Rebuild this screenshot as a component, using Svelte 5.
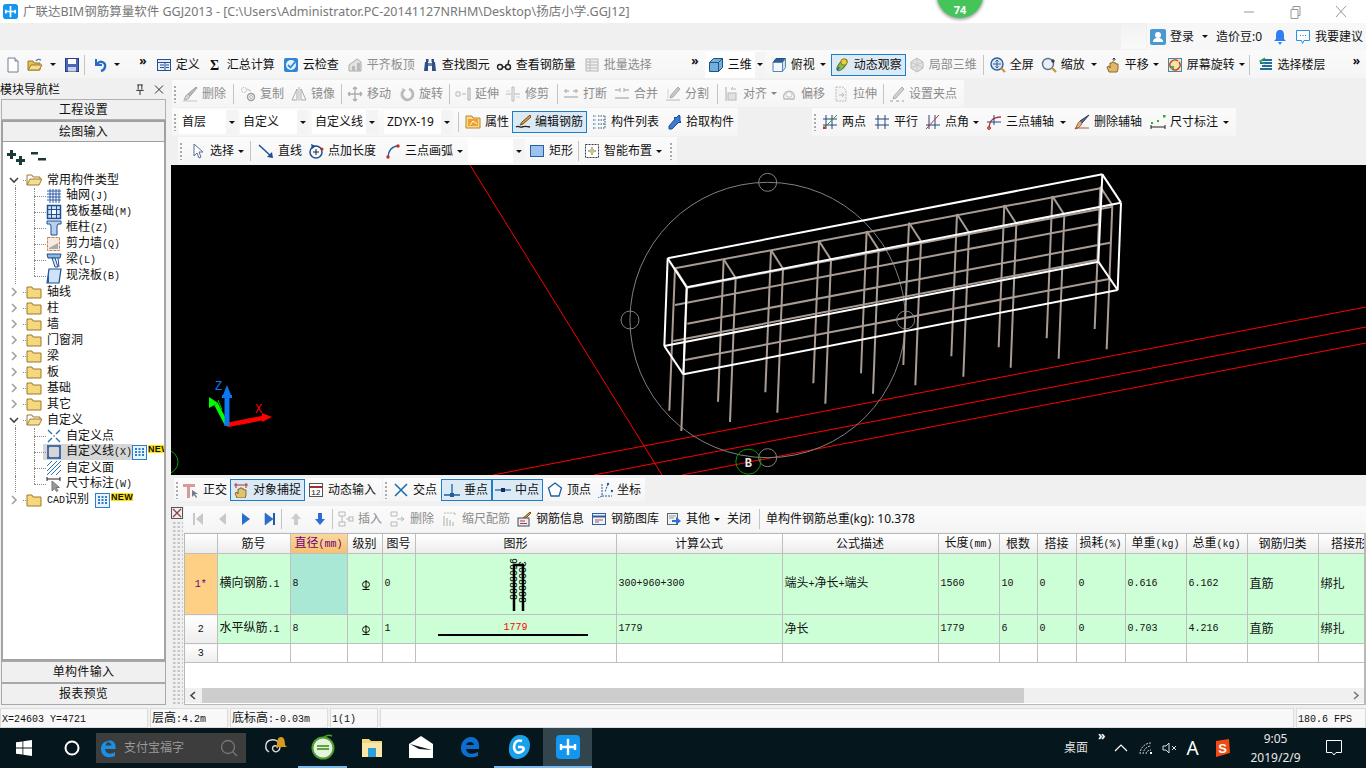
<script lang="ts">
  // 16x16 icon bodies, keyed by name
  const ICONS: Record<string, string> = {
    new: '<path d="M3 1h7l3 3v11H3z" fill="#fff" stroke="#6f7f90"/><path d="M10 1v3h3" fill="#dde5ee" stroke="#6f7f90"/>',
    open: '<path d="M1 13V4h5l1 2h6v7z" fill="#e8bf5a" stroke="#9a7a2a"/><path d="M1 13l3-5h11l-3 5z" fill="#f6dc8c" stroke="#9a7a2a"/><path d="M9 4c1-2 3-2 5-1" fill="none" stroke="#4a7fb5" stroke-width="1.4"/>',
    save: '<rect x="1.5" y="1.5" width="13" height="13" fill="#4a68b8" stroke="#27407f"/><rect x="4" y="2" width="8" height="5" fill="#fff"/><rect x="4" y="10" width="8" height="4.5" fill="#c8d3ea"/>',
    undo: '<path d="M3 2v6h6" fill="none" stroke="#2a6cc4" stroke-width="2"/><path d="M4 7c3-4 9-2 8 3-.4 2-2 3.500-4 4" fill="none" stroke="#2a6cc4" stroke-width="2.400"/>',
    def: '<rect x="1.500" y="2.500" width="13" height="11" fill="#e6eefa" stroke="#24528f"/><path d="M1.500 5.500h13M4 8h4M4 10.500h4M10 8h3M10 10.500h3M9 5.500v8" stroke="#24528f" fill="none"/>',
    sigma: '<text x="3" y="13" font-size="14" font-weight="700" font-family="Liberation Serif" fill="#111">Σ</text>',
    cloud: '<rect x="1" y="1" width="14" height="14" rx="2" fill="#2f86d6"/><circle cx="8" cy="8" r="5" fill="#e8f3fc"/><path d="M5 8l2.500 2.500L12 5" fill="none" stroke="#2f86d6" stroke-width="1.800"/>',
    level: '<path d="M2 14V8l8-6 4 3v9z" fill="#ddd" stroke="#999"/><path d="M5 14V9h3v5zM10 14V6h3v8z" fill="#aaa"/>',
    binoc: '<path d="M2 14l1-9h3v9zM10 14V5h3l1 9z" fill="#2d4f86"/><rect x="6" y="6" width="4" height="3" fill="#5b7fb5"/><rect x="4" y="2" width="2.500" height="3" fill="#2d4f86"/><rect x="9.500" y="2" width="2.500" height="3" fill="#2d4f86"/>',
    glasses: '<circle cx="4" cy="10" r="2.500" fill="none" stroke="#222" stroke-width="1.400"/><circle cx="12" cy="10" r="2.500" fill="none" stroke="#222" stroke-width="1.400"/><path d="M6.500 10h3M12 7l1-4" stroke="#222" stroke-width="1.300" fill="none"/>',
    batch: '<rect x="2" y="2" width="12" height="12" fill="#eee" stroke="#aaa"/><path d="M2 5h12M2 8h12M2 11h12M6 2v12" stroke="#aaa"/>',
    cube: '<path d="M1.500 5.500l4-4h9v9l-4 4h-9z" fill="#6fb0dc" stroke="#23527f"/><path d="M1.500 5.500h9v9M10.500 5.500l4-4" fill="none" stroke="#23527f"/>',
    cubetop: '<path d="M5 1.500h9.500l-3 4H2z" fill="#2f5f98" stroke="#23527f"/><path d="M2 5.500h9.500v9H2z" fill="#f4f8fc" stroke="#5a86b0"/><path d="M11.500 5.500l3-4v9l-3 4z" fill="#cfe3f2" stroke="#5a86b0"/>',
    orbit: '<ellipse cx="8" cy="8" rx="7" ry="3" transform="rotate(-50 8 8)" fill="#8fb84a" stroke="#4a7a3a"/><circle cx="10" cy="5" r="3.200" fill="#e8d23c" stroke="#8a7a1a"/><path d="M3 13l2-3" stroke="#1f6f8f" stroke-width="2"/>',
    local3d: '<path d="M8 1l6 4v6l-6 4-6-4V5z" fill="#ddd" stroke="#aaa"/><path d="M2 5l12 6M14 5L2 11M8 1v14" stroke="#bbb" fill="none"/>',
    full: '<circle cx="7" cy="7" r="6" fill="#d8e6f6" stroke="#2f5f98" stroke-width="1.400"/><path d="M7 3v8M3 7h8M7 3l-1.500 1.500M7 3l1.500 1.500M7 11l-1.500-1.500M7 11l1.500-1.500" stroke="#2f5f98" fill="none"/><path d="M11 11l4 4" stroke="#c89030" stroke-width="2"/>',
    zoom: '<circle cx="7" cy="7" r="5.500" fill="#e8eff8" stroke="#5a6f88" stroke-width="1.400"/><path d="M11 11l4 4" stroke="#c89030" stroke-width="2.200"/><path d="M12 2v4M10 4h4" stroke="#222"/>',
    pan: '<path d="M4 15l-2-5 2-1 1 2V6h2v-1h2v1h2v1h2v5l-1 3z" fill="#e2b868" stroke="#8a6a2a"/><path d="M9 1v3M7.500 2.500L9 1l1.500 1.500" stroke="#334" fill="none"/>',
    rotscr: '<rect x="1.500" y="1.500" width="13" height="13" fill="#f2e6a6" stroke="#3a8ac0"/><path d="M4 11a5 5 0 0 1 7-7M12 5a5 5 0 0 1-7 7" fill="none" stroke="#d03020" stroke-width="1.300"/><rect x="4" y="9" width="3" height="3" fill="#58a858"/>',
    floors: '<path d="M4 3h10M2 6h12M4 9h10M2 12h12" stroke="#1f6f9f" stroke-width="1.800"/><path d="M7 1L2 4l5 3" fill="none" stroke="#3a9a5a" stroke-width="1.300"/>',
    brush: '<path d="M14 1l1 1-7 8-2-2z" fill="#aaa" stroke="#888"/><path d="M6 8l2 2c-1 3-3 4-6 4 1-1 1-5 4-6z" fill="#ccc" stroke="#999"/><path d="M1 15h14" stroke="#bbb"/>',
    copy: '<circle cx="4" cy="4" r="2.500" fill="none" stroke="#999" stroke-dasharray="1.500 1"/><circle cx="11" cy="11" r="3.500" fill="none" stroke="#888" stroke-width="1.400"/><circle cx="11" cy="11" r="1.500" fill="none" stroke="#aaa"/><path d="M7 3l4 2" stroke="#aaa"/>',
    mirror: '<path d="M1 14L6 3v11zM15 14L10 3v11z" fill="none" stroke="#999"/><path d="M8 1v14" stroke="#aaa"/>',
    move: '<path d="M8 1v14M1 8h14M8 1L6 3M8 1l2 2M8 15l-2-2M8 15l2-2M1 8l2-2M1 8l2 2M15 8l-2-2M15 8l-2 2" fill="none" stroke="#999" stroke-width="1.300"/>',
    rot: '<path d="M10 3a5.500 5.500 0 1 1-6 2" fill="none" stroke="#aaa" stroke-width="2.800"/><path d="M3 2l1 5 3-3z" fill="#aaa"/>',
    extend: '<path d="M1 6h4v4H1zM7 8h4" fill="none" stroke="#aaa"/><path d="M13 2h2v12h-2z" fill="none" stroke="#999"/>',
    trim: '<path d="M7 1h2v14H7zM1 8h5M10 8h5" fill="none" stroke="#aaa"/><path d="M1 5h4M11 11h4" stroke="#ccc"/>',
    brk: '<path d="M1 5h5M10 5h5M1 11h14M3 3v4M13 3v4" fill="none" stroke="#aaa" stroke-width="1.300"/>',
    merge: '<path d="M1 4h5M10 4h5M1 12h14M6 2v4M10 2v4" fill="none" stroke="#aaa" stroke-width="1.300"/>',
    split: '<path d="M13 1l2 2-7 8-3 1 1-3z" fill="#bbb" stroke="#999"/><path d="M1 14h14" stroke="#aaa"/><path d="M3 3v9" stroke="#ccc"/>',
    alignl: '<path d="M3 1v14" stroke="#999"/><rect x="5" y="7" width="8" height="7" fill="#ddd" stroke="#aaa"/><path d="M8 3h5M8 3l2-2" stroke="#aaa" fill="none"/>',
    offset: '<path d="M3 13a5.500 5.500 0 1 1 10 0z" fill="none" stroke="#aaa" stroke-width="1.300"/><path d="M6 11a3 3 0 1 1 4 0z" fill="none" stroke="#bbb"/>',
    stretch: '<path d="M3 1h7l3 3v11H3z" fill="#f4f4f4" stroke="#aaa" stroke-dasharray="2 1"/><path d="M6 9h5M9 7l2 2-2 2" stroke="#aaa" fill="none"/>',
    grips: '<path d="M13 1l2 2-8 9-3 1 1-3z" fill="#ccc" stroke="#999"/><path d="M1 15h3M7 15h3M13 15h2" stroke="#888"/>',
    props: '<path d="M1 14V2h6l1 2h7v10z" fill="#f6dc8c" stroke="#b8862a"/><rect x="3" y="5" width="10" height="7" fill="#f0a030"/><path d="M5 11l3-4 4 3" fill="none" stroke="#fff"/>',
    edit: '<path d="M15 1l-8 7-2 3 3-1 8-7z" fill="#d8a040" stroke="#7a4a1a"/><path d="M1 13c3-2 4 1 6 0s4-1 8 0" fill="none" stroke="#222" stroke-width="1.400"/>',
    list: '<path d="M2 2h3M2 6h3M2 10h3M2 14h3M7 2h7M7 6h7M7 10h7M7 14h7M14 2v12" stroke="#1f4f80" stroke-dasharray="1.500 1" fill="none"/>',
    pick: '<path d="M14 2l-1-1-3 3-1-1-1 1 1 1-6 7v3h3l7-7 1 1 1-1-1-1z" fill="#3a7ad0" stroke="#1f4f90"/>',
    two: '<path d="M4 1v14M10 1v14M1 5h14M1 11h14" stroke="#24467f" fill="none"/><path d="M1 15L15 1" stroke="#3a9a3a"/><rect x="1" y="12.500" width="2.500" height="2.500" fill="#c03020"/>',
    par: '<path d="M4 1v14M11 1v14M1 5h14M1 11h14" stroke="#24467f" fill="none"/>',
    angle: '<path d="M4 1v14M10 1v14M1 11h14" stroke="#24467f" fill="none"/><path d="M1 15L14 1" stroke="#c03030"/>',
    arc3: '<path d="M3 15c0-7 3-12 12-12" fill="none" stroke="#c03030" stroke-width="1.300"/><path d="M1 8h14M8 1v10" stroke="#24467f"/><circle cx="3" cy="14" r="1.500" fill="none" stroke="#c03030"/>',
    delaux: '<path d="M15 1l-7 8-2-2z" fill="#5a6fb0" stroke="#334"/><path d="M6 7l2 2c-1 3-3 5-7 6 2-2 2-6 5-8z" fill="#e2b868" stroke="#865"/><path d="M1 14h14" stroke="#a55"/>',
    dim: '<path d="M1 11v4M15 11v4M1 13h14" stroke="#222" fill="none"/><rect x="1" y="8" width="2" height="2" fill="#3a3"/><rect x="13" y="1" width="2.500" height="2.500" fill="#3a3"/><rect x="7" y="6" width="2" height="2" fill="#3a3"/>',
    cursor: '<path d="M4 1v12l3-3 2 5 2-1-2-5h4z" fill="#fff" stroke="#5a6f90"/>',
    line: '<path d="M1 2l13 12" stroke="#1f4f90" stroke-width="1.500"/><path d="M15 15l-1-6-5 5z" fill="#1f4f90"/>',
    addlen: '<circle cx="8" cy="9" r="6" fill="none" stroke="#1f4f90" stroke-width="1.500"/><path d="M8 6v6M5 9h6" stroke="#222"/><path d="M3 1l1 5 4-3z" fill="#1f4f90"/><circle cx="14" cy="6" r="1.500" fill="#c03020"/>',
    arc: '<path d="M3 14C3 8 7 3 13 3" fill="none" stroke="#2a5fa0" stroke-width="1.500"/><circle cx="3" cy="14" r="1.700" fill="#c03020"/><circle cx="13" cy="3" r="1.700" fill="#c03020"/>',
    rect: '<rect x="1.500" y="2.500" width="13" height="11" fill="#9cc2ee" stroke="#2a5fa0"/>',
    smart: '<rect x="1.500" y="1.500" width="13" height="13" fill="#fff" stroke="#334" stroke-dasharray="2 1"/><path d="M8 4v8M4 8h8" stroke="#2a6fc0"/><rect x="6" y="6" width="4" height="4" fill="#e8c050"/>',
    ortho: '<path d="M0 2h12v3H7v11H4V5H0z" fill="#d89a9a"/><path d="M9 8v7l2-2 2 3 1-1-2-3h3z" fill="#778"/>',
    snap: '<path d="M4 16l-2-5 2-1 1 2V7h2V6h2v1h2v1h2v5l-1 3z" fill="#e2c470" stroke="#8a6a2a"/><path d="M1 3h14M3 1v5M13 1v5" stroke="#a33" fill="none"/>',
    dyn: '<rect x="1.500" y="1.500" width="13" height="13" fill="#fff" stroke="#555"/><path d="M1.500 5h13" stroke="#a03030" stroke-width="2"/><text x="3" y="13" font-size="8" font-family="Liberation Mono" fill="#111">12</text>',
    cross: '<path d="M2 2l12 12M14 2L2 14" stroke="#1f6fb0" stroke-width="1.600"/>',
    perp: '<path d="M0 13h16M8 2v11" stroke="#1f5f9f" stroke-width="1.300"/><rect x="6" y="11" width="4" height="4" fill="#1f5f9f"/>',
    mid: '<path d="M0 8h16" stroke="#1f5f9f" stroke-width="1.300"/><rect x="6" y="6" width="4" height="4" fill="#12305f"/>',
    vertex: '<path d="M8 1l6.500 5-2.500 8H4L1.500 6z" fill="#fff" stroke="#1f5f9f" stroke-width="1.300"/>',
    coord: '<path d="M5 2v12h10M5 14l-4 2M11 2l-3 8" stroke="#1f5f9f" stroke-dasharray="2 1" fill="none"/><circle cx="11" cy="2" r="1.200" fill="#1f5f9f"/><circle cx="15" cy="9" r="1.200" fill="#1f5f9f"/>',
    first: '<rect x="3" y="2" width="2" height="12" fill="#c8c8c8"/><path d="M13 2v12L6 8z" fill="#c8c8c8"/>',
    prev: '<path d="M12 2v12L5 8z" fill="#c8c8c8"/>',
    next: '<path d="M4 2v12l8-6z" fill="#2a6fd0"/>',
    last: '<path d="M3 2v12l8-6z" fill="#2a6fd0" stroke="#1f5fa0" stroke-width=".5"/><rect x="11" y="2" width="2" height="12" fill="#1f5fa0"/>',
    up: '<path d="M8 2l5 6h-3v6H6V8H3z" fill="#ccc"/>',
    down: '<path d="M8 14l5-6h-3V2H6v6H3z" fill="#2a6fd0"/>',
    ins: '<path d="M1 1h6v4H1zM1 11h6v4H1zM4 5v6M8 8h4" fill="none" stroke="#aaa"/><rect x="11" y="6" width="4" height="4" fill="none" stroke="#aaa"/>',
    delr: '<path d="M1 1h6v4H1zM1 11h6v4H1zM7 8h7M11 6l3 2-3 2" fill="none" stroke="#aaa"/>',
    scale: '<path d="M2 15V5M5 15V7M8 15V9M11 15v-4" stroke="#bbb" stroke-width="1.500"/><path d="M2 2h11M13 2v3" stroke="#aaa" stroke-dasharray="2 1" fill="none"/>',
    info: '<path d="M14 1l1 1-7 7-2-1z" fill="#d8a040" stroke="#7a4a1a"/><rect x="2" y="7" width="11" height="8" fill="#e8eef8" stroke="#445"/><path d="M4 10h5M4 12.500h7" stroke="#c03030"/>',
    lib: '<rect x="1.500" y="2.500" width="13" height="11" fill="#eef3fa" stroke="#2f5f98"/><path d="M1.500 5.500h13" stroke="#2f5f98" stroke-width="2"/><path d="M4 9h8M4 11h4" stroke="#a55"/>',
    other: '<rect x="1.500" y="2.500" width="10" height="11" fill="#eef3fa" stroke="#566"/><path d="M3 5h7M3 7h5" stroke="#999"/><path d="M6 9h4V6l5 4-5 4v-3H6z" fill="#2a6fd0"/>',
    user: '<rect width="16" height="16" rx="2" fill="#4a9ad0"/><circle cx="8" cy="6" r="3" fill="#fff"/><path d="M3 13c0-3 2-4 5-4s5 1 5 4z" fill="#fff"/>',
    bell: '<path d="M8 1c3 0 4 2 4 5v4l2 2H2l2-2V6c0-3 1-5 4-5z" fill="#2f7ff0"/><path d="M6 13h4l-2 3z" fill="#2f7ff0"/>',
    suggest: '<path d="M1.500 1.500h13v10H9l-1.500 3-1-3h-5z" fill="#fff" stroke="#2f8fe0"/><path d="M5 6.500h1M7.500 6.500h1M10 6.500h1" stroke="#2f6fc0"/>',
    grid: '<path d="M1 3h14M1 6h14M1 9h14M1 12h14M4 1v14M7 1v14M10 1v14M13 1v14" stroke="#2a5fa8"/>',
    raft: '<rect x="1.500" y="1.500" width="13" height="13" fill="#cfe2f4" stroke="#1f4f90" stroke-width="1.500"/><path d="M1.500 5.500h13M1.500 10.500h13M5.500 1.500v13M10.500 1.500v13" stroke="#1f4f90"/><rect x="6" y="6" width="4" height="4" fill="#fff"/>',
    col: '<path d="M1 1h14v3h-3l-1 2v9H5V6L4 4H1z" fill="#b8d0ec" stroke="#1f4f90"/>',
    wall: '<rect x="1.500" y="1.500" width="12" height="13" fill="#f4ece4" stroke="#d08040" stroke-dasharray="3 1"/><path d="M3 12l9-5v6H3z" fill="#aaa"/>',
    beam: '<path d="M1 2h14l-1 4H2z" fill="#8cb8e0" stroke="#1f4f90"/><path d="M6 6h3l3 9H9z" fill="#dceaf8" stroke="#1f4f90"/><path d="M12 6l1 9" stroke="#1f4f90"/>',
    slab: '<path d="M3 1h12l-2 14H1z" fill="#cfe2f8" stroke="#1f4f90" stroke-width="1.200"/><path d="M3 1L1 15h2z" fill="#2a5fa8"/>',
    xpt: '<path d="M2 2l4 4M10 10l4 4M14 2l-4 4M6 10l-4 4" stroke="#2a6fb0" stroke-width="1.300"/><circle cx="8" cy="8" r="1" fill="#99b"/>',
    ln: '<rect x="2" y="2" width="12" height="12" fill="none" stroke="#1f4f90" stroke-width="1.500"/><rect x="1" y="1" width="2.500" height="2.500" fill="#2a6fb0"/><rect x="12.500" y="1" width="2.500" height="2.500" fill="#2a6fb0"/><rect x="1" y="12.500" width="2.500" height="2.500" fill="#2a6fb0"/><rect x="12.500" y="12.500" width="2.500" height="2.500" fill="#2a6fb0"/>',
    hatch: '<path d="M1 6l5-5M1 11L11 1M1 15L15 1M5 15L15 5M10 15l5-5" stroke="#2a6fb0"/>',
    dimr: '<path d="M1 1v4M14 1v4M1 3h13" stroke="#222"/><path d="M6 5v10l2.500-2.500 2 3 1.500-1-2-3h3.500z" fill="#999" stroke="#777"/>',
  };

  type Item = { i?: string; t?: string; w?: number; c?: boolean; d?: boolean; a?: boolean; hl?: boolean; k?: string; sp?: number };

  const bar1: Item[] = [
    { sp: 2 }, { i: 'new', w: 22 }, { i: 'open', w: 37, c: true }, { i: 'save', w: 21 }, { k: 'sep' }, { sp: 2 },
    { i: 'undo', w: 35, c: true }, { k: 'more', w: 28 },
    { i: 'def', t: '定义', w: 51 }, { i: 'sigma', t: '汇总计算', w: 76 }, { i: 'cloud', t: '云检查', w: 64 },
    { i: 'level', t: '平齐板顶', w: 75, d: true }, { i: 'binoc', t: '查找图元', w: 74 }, { i: 'glasses', t: '查看钢筋量', w: 88 },
    { i: 'batch', t: '批量选择', w: 74, d: true }, { k: 'more', w: 50 },
    { i: 'cube', t: '三维', w: 63, c: true, hl: true }, { i: 'cubetop', t: '俯视', w: 63, c: true }, { i: 'orbit', t: '动态观察', w: 75, a: true },
    { i: 'local3d', t: '局部三维', w: 75, d: true }, { k: 'sep' }, { i: 'full', t: '全屏', w: 51 }, { i: 'zoom', t: '缩放', w: 64, c: true },
    { i: 'pan', t: '平移', w: 62, c: true }, { i: 'rotscr', t: '屏幕旋转', w: 83, c: true }, { k: 'sep' }, { sp: 2 }, { i: 'floors', t: '选择楼层', w: 75 },
    { sp: 22 }, { k: 'more', w: 16 },
  ];
  const bar2: Item[] = [
    { k: 'grip' }, { i: 'brush', t: '删除', w: 51, d: true }, { k: 'sep' }, { sp: 1 }, { i: 'copy', t: '复制', w: 51, d: true }, { i: 'mirror', t: '镜像', w: 50, d: true },
    { k: 'sep' }, { i: 'move', t: '移动', w: 52, d: true }, { i: 'rot', t: '旋转', w: 50, d: true }, { k: 'sep' }, { i: 'extend', t: '延伸', w: 50, d: true },
    { i: 'trim', t: '修剪', w: 52, d: true }, { k: 'sep' }, { i: 'brk', t: '打断', w: 51, d: true }, { i: 'merge', t: '合并', w: 51, d: true }, { i: 'split', t: '分割', w: 52, d: true },
    { k: 'sep' }, { i: 'alignl', t: '对齐', w: 58, c: true, d: true }, { i: 'offset', t: '偏移', w: 52, d: true }, { i: 'stretch', t: '拉伸', w: 50, d: true }, { k: 'sep' },
    { i: 'grips', t: '设置夹点', w: 76, d: true },
  ];
  const bar3a: Item[] = [
    { k: 'grip' }, { k: 'sel', t: '首层', w: 59 }, { sp: 2 }, { k: 'sel', t: '自定义', w: 69 }, { sp: 3 }, { k: 'sel', t: '自定义线', w: 66 }, { sp: 6 },
    { k: 'sel', t: 'ZDYX-19', w: 69 }, { sp: 2 }, { k: 'sep' }, { sp: 1 }, { i: 'props', t: '属性', w: 50 }, { i: 'edit', t: '编辑钢筋', w: 75, a: true }, { sp: 1 },
    { i: 'list', t: '构件列表', w: 75 }, { i: 'pick', t: '拾取构件', w: 73 },
  ];
  const bar3b: Item[] = [
    { k: 'grip' }, { i: 'two', t: '两点', w: 52 }, { i: 'par', t: '平行', w: 51 }, { i: 'angle', t: '点角', w: 61, c: true }, { i: 'arc3', t: '三点辅轴', w: 88, c: true },
    { i: 'delaux', t: '删除辅轴', w: 76 }, { i: 'dim', t: '尺寸标注', w: 87, c: true },
  ];
  const bar4: Item[] = [
    { k: 'grip' }, { sp: 2 }, { i: 'cursor', t: '选择', w: 60, c: true }, { k: 'sep' }, { sp: 2 }, { i: 'line', t: '直线', w: 50 }, { i: 'addlen', t: '点加长度', w: 75 }, { sp: 2 },
    { i: 'arc', t: '三点画弧', w: 86, c: true }, { k: 'sel', t: '', w: 57 }, { sp: 1 }, { i: 'rect', t: '矩形', w: 49 }, { k: 'sep' }, { i: 'smart', t: '智能布置', w: 86, c: true }, { sp: 1 }, { k: 'grip' },
  ];
  const snapA: Item[] = [
    { k: 'grip' }, { sp: -1 }, { i: 'ortho', t: '正交', w: 50 }, { i: 'snap', t: '对象捕捉', w: 75, a: true }, { i: 'dyn', t: '动态输入', w: 77 },
  ];
  const snapB: Item[] = [
    { k: 'grip' }, { i: 'cross', t: '交点', w: 51 }, { i: 'perp', t: '垂点', w: 51, a: true }, { i: 'mid', t: '中点', w: 51, a: true }, { sp: 1 }, { i: 'vertex', t: '顶点', w: 50 }, { i: 'coord', t: '坐标', w: 51 },
  ];
  const panelBar: Item[] = [
    { sp: 3 }, { i: 'first', w: 24 }, { i: 'prev', w: 24 }, { i: 'next', w: 24 }, { i: 'last', w: 19 }, { k: 'sep' }, { sp: 1 }, { i: 'up', w: 24 }, { i: 'down', w: 20 }, { k: 'sep' },
    { i: 'ins', t: '插入', w: 52, d: true }, { i: 'delr', t: '删除', w: 52, d: true }, { i: 'scale', t: '缩尺配筋', w: 74, d: true }, { i: 'info', t: '钢筋信息', w: 75 },
    { i: 'lib', t: '钢筋图库', w: 75 }, { i: 'other', t: '其他', w: 61, c: true }, { t: '关闭', w: 32 }, { k: 'sep' },
  ];

  type Node = { t: string; i?: string; open?: boolean; child?: boolean; last?: boolean; sel?: boolean; badge?: boolean };
  const tree: Node[] = [
    { t: '常用构件类型', open: true },
    { t: '轴网(J)', i: 'grid', child: true },
    { t: '筏板基础(M)', i: 'raft', child: true },
    { t: '框柱(Z)', i: 'col', child: true },
    { t: '剪力墙(Q)', i: 'wall', child: true },
    { t: '梁(L)', i: 'beam', child: true },
    { t: '现浇板(B)', i: 'slab', child: true, last: true },
    { t: '轴线' }, { t: '柱' }, { t: '墙' }, { t: '门窗洞' }, { t: '梁' }, { t: '板' }, { t: '基础' }, { t: '其它' },
    { t: '自定义', open: true },
    { t: '自定义点', i: 'xpt', child: true },
    { t: '自定义线(X)', i: 'ln', child: true, sel: true, badge: true },
    { t: '自定义面', i: 'hatch', child: true },
    { t: '尺寸标注(W)', i: 'dimr', child: true, last: true },
    { t: 'CAD识别', badge: true },
  ];

  const cols = [32, 73, 57, 35, 33, 201, 166, 156, 61, 38, 39, 49, 61, 61, 71, 62];
  const head = ['', '筋号', '直径(mm)', '级别', '图号', '图形', '计算公式', '公式描述', '长度(mm)', '根数', '搭接', '损耗(%)', '单重(kg)', '总重(kg)', '钢筋归类', '搭接形'];
  const rows = [
    { n: '1*', name: '横向钢筋.1', d: '8', no: '0', f: '300+960+300', desc: '端头+净长+端头', len: '1560', cnt: '10', lap: '0', loss: '0', uw: '0.616', tw: '6.162', cat: '直筋', lt: '绑扎' },
    { n: '2', name: '水平纵筋.1', d: '8', no: '1', f: '1779', desc: '净长', len: '1779', cnt: '6', lap: '0', loss: '0', uw: '0.703', tw: '4.216', cat: '直筋', lt: '绑扎' },
  ];

  // split into CJK and latin runs: latin is drawn in the narrow mono face
  function runs(s: string) {
    return (s.match(/[\u4e00-\u9fff]+|[^\u4e00-\u9fff]+/g) ?? []).map((r) => ({ s: r, lat: !/[\u4e00-\u9fff]/.test(r) }));
  }

  // the 3D view was read off a 3x crop whose origin is (620,165); the svg starts at (171,165)
  const px = (x: number) => 449 + x / 3;
  const py = (y: number) => y / 3;
  const seg = (a: number, b: number, c: number, d: number) => ({ x1: px(a), y1: py(b), x2: px(c), y2: py(d) });

  const box = [
    seg(143, 280, 1447, 28), seg(200, 367, 1503, 113), seg(133, 543, 1435, 290), seg(190, 628, 1493, 375),
    seg(143, 280, 133, 543), seg(200, 367, 190, 628), seg(1447, 28, 1435, 290), seg(1503, 113, 1493, 375),
    seg(143, 280, 200, 367), seg(133, 543, 190, 628), seg(1447, 28, 1503, 113), seg(1435, 290, 1493, 375),
  ];
  const stirrupTops = [[165, 310], [311, 283], [453, 255], [597, 228], [740, 198], [867, 173], [1011, 147], [1153, 120], [1297, 93], [1441, 65]];
  const rebar = [
    ...stirrupTops.flatMap(([x, y]) => [
      seg(x, y, x - 17, y + 427),
      seg(x + 36, y + 56, x + 19, y + 488),
      seg(x, y, x + 36, y + 56),
    ]),
    seg(165, 310, 1441, 70), seg(202, 368, 1477, 125), seg(165, 420, 1435, 178),
    seg(202, 476, 1470, 233), seg(160, 528, 1430, 285), seg(195, 585, 1467, 342),
  ];
</script>

{#snippet ic(name)}
  <svg class="ic" viewBox="0 0 16 16">{@html ICONS[name]}</svg>
{/snippet}

{#snippet mixed(s)}
  {#each runs(s) as r}<span class:lat={r.lat}>{r.s}</span>{/each}
{/snippet}

{#snippet items(list)}
  {#each list as it}
    {#if it.sp}
      <span style="width:{it.sp}px; margin-right:{it.sp < 0 ? it.sp : 0}px"></span>
    {:else if it.k === 'sep'}
      <span class="sep"></span>
    {:else if it.k === 'grip'}
      <span class="grip"></span>
    {:else if it.k === 'more'}
      <span class="more" style="width:{it.w}px">»</span>
    {:else if it.k === 'sel'}
      <span class="sel" style="width:{it.w}px"><span class="sel-t">{it.t}</span><i class="caret-box"><i class="caret"></i></i></span>
    {:else}
      <span class="btn" class:on={it.a} class:off={it.d} class:hl={it.hl} style="width:{it.w}px">
        {#if it.i}{@render ic(it.i)}{/if}
        {#if it.t}<span>{it.t}</span>{/if}
        {#if it.c}<i class="caret push"></i>{/if}
      </span>
    {/if}
  {/each}
{/snippet}

<div class="app">
  <header class="title">
    <svg class="logo" viewBox="0 0 16 16"><rect width="16" height="16" rx="3" fill="#1296f0" /><path d="M8 2v12M8 8H3M8 8h5M3 6v4M13 6v4" stroke="#fff" stroke-width="1.800" fill="none" /></svg>
    <span class="title-t">广联达BIM钢筋算量软件 GGJ2013 - [C:\Users\Administrator.PC-20141127NRHM\Desktop\扬店小学.GGJ12]</span>
    <span class="winctl">
      <svg viewBox="0 0 46 23"><path d="M18 12h10" stroke="#999" /></svg>
      <svg viewBox="0 0 46 23"><path d="M19 9.500h7v9h-7zM21 9V6.500h7v9h-2" stroke="#999" fill="none" /></svg>
      <svg viewBox="0 0 46 23"><path d="M18 6l10 11M28 6L18 17" stroke="#999" fill="none" /></svg>
    </span>
    <span class="badge74">74</span>
  </header>

  <div class="userband">
    <span class="blank"></span>
    <span class="userbox">
      <svg class="ic" viewBox="0 0 16 16">{@html ICONS.user}</svg>
      <span class="ml4">登录</span><i class="caret ml8"></i>
      <span class="ml8">造价豆:0</span>
      <svg class="ic ml10" viewBox="0 0 16 16">{@html ICONS.bell}</svg>
      <svg class="ic ml7" viewBox="0 0 16 16">{@html ICONS.suggest}</svg>
      <span class="ml4">我要建议</span>
    </span>
  </div>

  <div class="bar bar1">{@render items(bar1)}</div>

  <div class="main">
    <aside class="left">
      <div class="nav-head">
        <span>模块导航栏</span>
        <svg class="pin" viewBox="0 0 10 12"><path d="M2 1h6M3 1v5M7 1v5M1 7h8M5 7v5" stroke="#222" fill="none" /></svg>
        <svg class="pin" viewBox="0 0 10 10"><path d="M1 1l8 8M9 1l-8 8" stroke="#333" /></svg>
      </div>
      <div class="nav-btn">工程设置</div>
      <div class="nav-btn cur">绘图输入</div>
      <div class="tree">
        <div class="tree-tools">
          <svg viewBox="0 0 40 18" width="40" height="18"><path d="M3 2h3v3h3v3H6v3H3V8H0V5h3zM12 8h3v3h3v3h-3v3h-3v-3H9v-3h3z" fill="#1d3a3a" /><path d="M24 4h7v2.500h-7zM31 10h8v2.500h-8z" fill="#1d3a3a" /></svg>
        </div>
        {#each tree as n}
          <div class="node" class:child={n.child}>
            {#if n.child}
              <span class="g1"></span>
              <span class="g2" class:end={n.last}></span>
              <span class="g3"></span>
              <span class="hit" class:sel={n.sel}>
                {@render ic(n.i)}
                <span class="node-t">{@render mixed(n.t)}</span>
              </span>
            {:else}
              <svg class="chev" viewBox="0 0 10 10">
                {#if n.open}
                  <path d="M1 3l4 4 4-4" fill="none" stroke="#444" stroke-width="1.600" />
                {:else}
                  <path d="M3 1l4 4-4 4" fill="none" stroke="#a0a0a0" stroke-width="1.600" />
                {/if}
              </svg>
              {#if n.open}<span class="g0"></span>{/if}
              <span class="dots"></span>
              <svg class="ic folder" viewBox="0 0 16 16">
                {#if n.open}
                  <path d="M1 13V3h5l1 2h7v3" fill="#fff" stroke="#a07a2a" /><path d="M1 13l3-6h12l-3 6z" fill="#f7dc96" stroke="#a07a2a" />
                {:else}
                  <path d="M1 14V3h5l1 2h8v9z" fill="#f6d77e" stroke="#a07a2a" />
                {/if}
              </svg>
              <span class="node-t top">{@render mixed(n.t)}</span>
            {/if}
            {#if n.badge}
              <svg class="book" viewBox="0 0 15 15"><rect x=".5" y=".5" width="14" height="14" fill="#eaf3fc" stroke="#2a7fd0" /><path d="M4 3v9M7.500 3v9M11 3v9" stroke="#2a7fd0" stroke-width="2" stroke-dasharray="2 1" /></svg>
              <span class="newtag">NEW</span>
            {/if}
          </div>
        {/each}
      </div>
      <div class="nav-btn low">单构件输入</div>
      <div class="nav-btn low">报表预览</div>
    </aside>

    <section class="right">
      <div class="bars">
        <div class="bar-row r2"><div class="block">{@render items(bar2)}</div></div>
        <div class="bar-row r3">
          <div class="block">{@render items(bar3a)}</div>
          <div class="block b3b">{@render items(bar3b)}</div>
        </div>
        <div class="bar-row r4"><div class="block">{@render items(bar4)}</div></div>
      </div>

      <div class="canvas">
        <svg viewBox="0 0 1195 310" width="1195" height="310">
          <line x1="299" y1="0" x2="491" y2="310" stroke="#f00" />
          <line x1="322" y1="310" x2="1195" y2="142" stroke="#f00" />
          <line x1="423" y1="310" x2="1195" y2="162" stroke="#f00" />
          <line x1="511" y1="310" x2="1195" y2="178" stroke="#f00" />
          <g fill="none" stroke="#808080">
            <circle cx={px(443)} cy={py(465)} r="137.700" />
            <circle cx={px(443)} cy={py(52)} r="9" />
            <circle cx={px(30)} cy={py(465)} r="9" />
            <circle cx={px(857)} cy={py(465)} r="9" />
            <circle cx={px(443)} cy={py(878)} r="9" />
          </g>
          {#each rebar as l}
            <line {...l} stroke="#a89c94" stroke-width="2" />
          {/each}
          {#each box as l}
            <line {...l} stroke="#fff" stroke-width="2" />
          {/each}
          <circle cx={px(385)} cy={py(890)} r="12.500" fill="none" stroke="#0a9a0a" />
          <circle cx="-5" cy="297" r="12" fill="none" stroke="#0a9a0a" />
          <text x={px(385)} y={py(890) + 5} text-anchor="middle" class="b-label">B</text>
          <!-- axis marker -->
          <path d="M56 260L45 239" stroke="#0f0" stroke-width="4" />
          <path d="M38 232v11l9-5z" fill="#0f0" />
          <path d="M56 260l36-7" stroke="#f00" stroke-width="4.500" />
          <path d="M91 248l10 4-10 5z" fill="#f00" />
          <path d="M56 261v-33" stroke="#0a78f0" stroke-width="5" />
          <path d="M56 220l-4 10h8z" fill="#0a78f0" />
          <path d="M51 230h10v3H51z" fill="#0a78f0" />
          <path d="M47 235l4 10" stroke="#0c0" />
          <text x="44" y="225" class="ax" fill="#0a78f0">Z</text>
          <text x="84" y="248" class="ax" fill="#f00">X</text>
        </svg>
      </div>

      <div class="snap">
        <div class="block">{@render items(snapA)}</div>
        <div class="block">{@render items(snapB)}</div>
      </div>

      <div class="panel">
        <div class="gutter">
          <svg viewBox="0 0 12 12" width="12" height="12"><rect x=".5" y=".5" width="11" height="11" fill="#eee" stroke="#555" /><path d="M2 2l8 8M10 2l-8 8" stroke="#844" stroke-width="1.300" /></svg>
          <div class="dots-col"></div>
        </div>
        <div class="panel-body">
          <div class="block panel-bar">
            {@render items(panelBar)}
            <span class="total">单构件钢筋总重(kg): 10.378</span>
          </div>
          <div class="grid-wrap">
            <table>
              <colgroup>
                {#each cols as w}<col style="width:{w}px" />{/each}
              </colgroup>
              <thead>
                <tr>
                  {#each head as h, i}
                    <th class:hot={i === 2}>{@render mixed(h)}</th>
                  {/each}
                </tr>
              </thead>
              <tbody>
                {#each rows as r, idx}
                  <tr class={idx === 0 ? 'tall' : 'mid-row'}>
                    <td class="rh" class:cur={idx === 0}><span class="lat">{r.n}</span></td>
                    <td class="nm">{@render mixed(r.name)}</td>
                    <td class="lat-c frozen" class:selected={idx === 0}>{r.d}</td>
                    <td class="grade">
                      <svg viewBox="0 0 12 12" width="12" height="12"><ellipse cx="6" cy="5.500" rx="3.500" ry="3" fill="none" stroke="#111" /><path d="M6 1v9M2.500 10.500h7" stroke="#111" /></svg>
                    </td>
                    <td class="lat-c">{r.no}</td>
                    <td class="shape">
                      {#if idx === 0}
                        <svg viewBox="0 0 201 60" width="201" height="60">
                          <g class="dim8">
                            <text transform="translate(94 4) rotate(90)">9608888</text>
                            <text transform="translate(103 7) rotate(90)">3008888</text>
                          </g>
                          <path d="M98 57V11h9v46" fill="none" stroke="#000" stroke-width="2.500" />
                        </svg>
                      {:else}
                        <span class="span-no">1779</span>
                        <span class="span-bar"></span>
                      {/if}
                    </td>
                    <td class="lat-c">{r.f}</td>
                    <td class="nm">{@render mixed(r.desc)}</td>
                    <td class="lat-c">{r.len}</td>
                    <td class="lat-c">{r.cnt}</td>
                    <td class="lat-c">{r.lap}</td>
                    <td class="lat-c">{r.loss}</td>
                    <td class="lat-c">{r.uw}</td>
                    <td class="lat-c">{r.tw}</td>
                    <td class="nm">{r.cat}</td>
                    <td class="nm">{r.lt}</td>
                  </tr>
                {/each}
                <tr class="blank-row">
                  <td class="rh"><span class="lat">3</span></td>
                  {#each cols.slice(1) as _, i}<td class:frozen={i === 1}></td>{/each}
                </tr>
              </tbody>
            </table>
            <div class="scroll">
              <svg class="arrow" viewBox="0 0 17 15"><path d="M10 4l-4 3.500 4 3.500" fill="none" stroke="#444" stroke-width="1.600" /></svg>
              <div class="thumb"></div>
              <svg class="arrow end" viewBox="0 0 17 15"><path d="M7 4l4 3.500-4 3.500" fill="none" stroke="#777" stroke-width="1.600" /></svg>
            </div>
          </div>
        </div>
      </div>
    </section>
  </div>

  <footer class="status">
    <span class="cell" style="width:148px"><span class="lat">X=24603 Y=4721</span></span>
    <span class="cell" style="width:78px">{@render mixed('层高:4.2m')}</span>
    <span class="cell" style="width:98px">{@render mixed('底标高:-0.03m')}</span>
    <span class="cell" style="width:48px"><span class="lat">1(1)</span></span>
    <span class="cell grow"></span>
    <span class="cell" style="width:70px"><span class="lat">180.6 FPS</span></span>
  </footer>

  <div class="taskbar">
    <span class="tk" style="width:48px">
      <svg viewBox="0 0 16 16" width="16" height="16"><path d="M0 2.300l6.500-.9v6.200H0zM7.300 1.300L16 0v7.600H7.300zM0 8.400h6.500v6.200L0 13.700zM7.300 8.400H16V16l-8.700-1.300z" fill="#fff" /></svg>
    </span>
    <span class="tk" style="width:48px">
      <svg viewBox="0 0 16 16" width="16" height="16"><circle cx="8" cy="8" r="6.500" fill="none" stroke="#fff" stroke-width="2" /></svg>
    </span>
    <span class="search">
      <svg viewBox="0 0 20 24" width="20" height="24"><path d="M17 13H6c.5 5 6 6 10 3v4c-6 3-14 1-14-7 0-5 3-8 8-8-2 1-3 3-3.500 4.500h6c0-3-4-4-6-3.500 4-3 10-2 10 5 0 1 0 1.500.5 2z" fill="#1a8fe8" /></svg>
      <span class="search-t">支付宝福字</span>
      <svg class="lens" viewBox="0 0 18 18" width="18" height="18"><circle cx="8" cy="8" r="6.500" fill="none" stroke="#777" stroke-width="1.300" /><path d="M12.500 12.500l4.500 4.500" stroke="#777" stroke-width="1.300" /></svg>
    </span>
    <span class="tk tkapp first">
      <svg viewBox="0 0 28 26" width="28" height="26"><path d="M9 18c-5-3-4-11 2-12 5-1 9 2 9 7 0 4-4 6-6 4-2-1-2-4 0-5s4 0 3 2" fill="none" stroke="#ddd" stroke-width="1.400" /><path d="M17 11c0-5 1-8 4-8s4 3 4 8l2 2H15z" fill="#d99a1c" /></svg>
    </span>
    <span class="tk tkapp run">
      <svg viewBox="0 0 24 26" width="24" height="26"><circle cx="12" cy="14" r="10.500" fill="#e8f0e0" stroke="#4aa02c" stroke-width="2" /><path d="M6 12h12M6 15h12" stroke="#5aa83c" stroke-width="2" /><path d="M13 3c3-2 6-2 8-1" stroke="#4aa02c" stroke-width="1.500" fill="none" /></svg>
    </span>
    <span class="tk tkapp">
      <svg viewBox="0 0 22 22" width="22" height="22"><path d="M1 3h7l2 2h11v16H1z" fill="#f4d67a" /><path d="M1 7h20v14H1z" fill="#f9e6a8" /><rect x="7" y="12" width="8" height="9" fill="#2a9fd8" /></svg>
    </span>
    <span class="tk tkapp">
      <svg viewBox="0 0 24 22" width="24" height="22"><path d="M0 8L12 0l12 8v14H0z" fill="#fff" /><path d="M1 8l22 6-13-1z" fill="#101820" /></svg>
    </span>
    <span class="tk tkapp">
      <svg viewBox="0 0 22 24" width="22" height="24"><path d="M20 14H7c.5 5 6 6 12 3v4c-8 3-17 1-17-8C2 6 7 2 12 2c6 0 9 5 8 12zM7 10h8c0-4-7-4-8 0z" fill="#0c6fd0" /></svg>
    </span>
    <span class="tk tkapp run">
      <svg viewBox="0 0 24 28" width="24" height="28"><path d="M12 2c8-1 11 5 11 10 0 9-7 14-13 14C4 26 1 20 2 14 3 6 8 2 12 2z" fill="#1aa0e8" /><path d="M15 8c-5-2-8 2-8 6s3 7 7 5 3-5 0-5h-3" fill="none" stroke="#fff" stroke-width="2.600" /></svg>
    </span>
    <span class="tk tkapp run active">
      <svg viewBox="0 0 24 24" width="24" height="24"><rect width="24" height="24" rx="4" fill="#1296f0" /><path d="M12 4v16M12 12H5M12 12h7M5 9v6M19 9v6" stroke="#fff" stroke-width="2.400" fill="none" /></svg>
    </span>

    <div class="tray">
      <span class="desk">桌面</span>
      <span class="tray-more">»</span>
      <svg viewBox="0 0 14 8" width="14" height="8" class="t-up"><path d="M1 7l6-6 6 6" fill="none" stroke="#fff" stroke-width="1.200" /></svg>
      <svg viewBox="0 0 14 14" width="14" height="14" class="t-wifi"><path d="M1 13c0-6 5-11 11-11M4 13c0-4 4-8 8-8M7 13c0-2 2-4 5-4" fill="none" stroke="#ccc" stroke-dasharray="2 1" /><rect x="11" y="11" width="2" height="2" fill="#fff" /></svg>
      <svg viewBox="0 0 16 14" width="16" height="14" class="t-vol"><path d="M1 5h3l3-3v10L4 9H1z" fill="none" stroke="#ddd" /><path d="M10 5l4 4M14 5l-4 4" stroke="#ddd" /></svg>
      <span class="ime">A</span>
      <svg viewBox="0 0 16 20" width="16" height="20" class="t-s"><path d="M2 3l13-2 1 14-14 4z" fill="#f04a10" /><text x="8.500" y="15" text-anchor="middle" class="s-t">S</text></svg>
      <span class="clock"><span>9:05</span><span>2019/2/9</span></span>
      <svg viewBox="0 0 16 16" width="16" height="16" class="t-note"><path d="M.5.500h15v12H10L8 15l-2-2.500H.5z" fill="none" stroke="#fff" /></svg>
    </div>
  </div>
</div>

<style>
  :global(body) {
    margin: 0;
  }

  .app {
    width: 1366px;
    height: 768px;
    overflow: hidden;
    display: flex;
    flex-direction: column;
    background: #f0f0f0;
    font-family: 'Noto Sans', 'Noto Sans CJK SC', sans-serif;
    font-size: 12px;
    line-height: 16px;
    color: #111;
  }

  .lat,
  .lat-c {
    font-family: 'Liberation Mono', monospace;
    font-size: 10px;
  }

  .ic {
    width: 16px;
    height: 16px;
    flex: none;
  }

  /* title bar */
  .title {
    height: 23px;
    flex: none;
    display: flex;
    align-items: center;
    background: #fff;
    position: relative;
    padding-left: 3px;
  }

  .logo {
    width: 15px;
    height: 15px;
    flex: none;
  }

  .title-t {
    margin-left: 5px;
    font-size: 12.500px;
    color: #777;
    white-space: nowrap;
  }

  .winctl {
    margin-left: auto;
    display: flex;
    margin-right: 2px;
  }

  .winctl svg {
    width: 46px;
    height: 23px;
  }

  .badge74 {
    position: absolute;
    left: 937px;
    top: -28px;
    width: 46px;
    height: 46px;
    border-radius: 50%;
    background: #45c45a;
    box-shadow: 0 1px 3px 1px #aaa;
    color: #fff;
    font-weight: 700;
    font-size: 11px;
    text-align: center;
    line-height: 16px;
    padding-top: 0;
    display: flex;
    align-items: flex-end;
    justify-content: center;
  }

  .userband {
    height: 27px;
    flex: none;
    display: flex;
    justify-content: flex-end;
  }

  .blank {
    width: 25px;
    margin: 1px 0;
    background: linear-gradient(#f2f2f2, #fafafa);
  }

  .userbox {
    width: 216px;
    margin-left: 1px;
    padding-left: 3px;
    display: flex;
    align-items: center;
    background: #f7f7f7;
  }

  .ml4 { margin-left: 4px; }
  .ml7 { margin-left: 7px; }
  .ml8 { margin-left: 8px; }
  .ml10 { margin-left: 10px; }

  /* toolbars */
  .bar {
    display: flex;
    align-items: center;
    white-space: nowrap;
  }

  .bar1 {
    height: 28px;
    flex: none;
    background: linear-gradient(#fafafa, #f5f5f5);
    margin-bottom: 2px;
    padding-top: 1px;
    box-sizing: border-box;
  }

  .bar-row {
    display: flex;
    height: 28px;
  }

  .r2 {
    height: 27px;
    margin-bottom: 1px;
    padding-left: 1px;
  }

  .r3 {
    margin-bottom: 1px;
    padding-left: 1px;
  }

  .r4 {
    padding-left: 7px;
  }

  .block {
    display: flex;
    align-items: center;
    background: linear-gradient(#fbfbfb, #f5f5f5);
    white-space: nowrap;
    padding-right: 2px;
  }

  .b3b {
    margin-left: 74px;
  }

  .btn {
    flex: none;
    height: 22px;
    box-sizing: border-box;
    padding-left: 3px;
    display: flex;
    align-items: center;
    gap: 4px;
    border: 1px solid transparent;
    border-width: 1px 0;
  }

  .btn.on {
    background: #dceaf6;
    outline: 1px solid #1c7ec8;
    outline-offset: -1px;
  }

  .btn.off {
    color: #8c8c8c;
  }

  .btn.off .ic {
    opacity: 0.8;
  }

  .btn.hl {
    height: 26px;
    background: linear-gradient(90deg, #fff 50px, #f4f4f4 50px 60px, transparent 60px);
  }

  .caret {
    display: block;
    width: 0;
    height: 0;
    flex: none;
    border: 3px solid transparent;
    border-top: 3px solid #111;
    border-bottom: 0;
  }

  .caret.push {
    margin-left: auto;
    margin-right: 5px;
  }

  .btn.off .caret {
    border-top-color: #888;
  }

  .sep {
    flex: none;
    width: 6px;
    height: 20px;
    background: linear-gradient(#c4c4c4, #c4c4c4) center / 1px 100% no-repeat;
  }

  .grip {
    flex: none;
    width: 7px;
    height: 18px;
    background: radial-gradient(circle, #aaa 1px, transparent 1.200px) 1px 0 / 4px 4px repeat-y;
  }

  .more {
    flex: none;
    box-sizing: border-box;
    padding-right: 6px;
    text-align: right;
    font-size: 12px;
    font-weight: 700;
    line-height: 12px;
    align-self: flex-start;
    margin-top: 4px;
  }

  .sel {
    flex: none;
    height: 24px;
    display: flex;
    align-items: center;
    background: #fff;
    box-sizing: border-box;
    padding-left: 3px;
  }

  .sel-t {
    flex: 1;
  }

  .caret-box {
    width: 12px;
    height: 24px;
    background: #f4f4f4;
    display: flex;
    align-items: center;
    justify-content: center;
  }

  /* left navigation */
  .main {
    flex: 1;
    min-height: 0;
    display: flex;
  }

  .left {
    width: 167px;
    flex: none;
    display: flex;
    flex-direction: column;
    box-sizing: border-box;
    padding-bottom: 3px;
  }

  .nav-head {
    height: 19px;
    flex: none;
    display: flex;
    align-items: center;
    gap: 6px;
    font-size: 12px;
  }

  .nav-head span {
    flex: 1;
  }

  .pin {
    width: 10px;
    height: 11px;
    margin-right: 3px;
  }

  .nav-btn {
    flex: none;
    box-sizing: border-box;
    height: 21px;
    line-height: 19px;
    text-align: center;
    letter-spacing: 0.300px;
    border: 1px solid #b0b0b0;
    margin-right: 1px;
    margin-left: 1px;
    background: #f0f0f0;
  }

  .nav-btn.cur {
    height: 22px;
    margin-top: 0;
    border: 2px solid #a0a0a0;
    border-bottom-width: 1px;
    line-height: 19px;
  }

  .nav-btn.low {
    height: 22px;
    margin-top: 0;
    line-height: 20px;
    border-color: #a8a8a8;
    border-top-width: 1px;
  }

  .tree {
    flex: 1;
    min-height: 0;
    box-sizing: border-box;
    background: #fff;
    border: 2px solid #a4a4a4;
    border-top: 0;
    margin: 0 1px;
    overflow: hidden;
    font-size: 12px;
  }

  .tree-tools {
    height: 30px;
    padding: 6px 0 0 4px;
    box-sizing: border-box;
  }

  .node {
    height: 16px;
    display: flex;
    align-items: center;
    position: relative;
    padding-left: 6px;
    white-space: nowrap;
  }

  .node.child {
    padding-left: 40px;
  }

  .chev {
    width: 10px;
    height: 10px;
    flex: none;
  }

  .dots {
    width: 3px;
    margin: 0 0 0 4px;
    flex: none;
    border-top: 1px dotted #888;
  }

  .folder {
    margin-right: 5px;
  }

  .node-t {
    margin-left: 4px;
  }

  .node-t.top {
    margin-left: 0;
  }

  .hit {
    display: flex;
    align-items: center;
    height: 16px;
    padding-left: 3px;
  }

  .hit.sel {
    background: #d6d6d6;
  }

  .g0,
  .g1,
  .g2 {
    position: absolute;
    top: 0;
    bottom: 0;
    border-left: 1px dotted #888;
  }

  .g0 {
    left: 12px;
    top: 13px;
  }

  .g1 {
    left: 12px;
  }

  .g2 {
    left: 31px;
  }

  .g2.end {
    bottom: 8px;
  }

  .g3 {
    position: absolute;
    left: 31px;
    top: 8px;
    width: 12px;
    border-top: 1px dotted #888;
  }

  .book {
    width: 15px;
    height: 15px;
    flex: none;
  }

  .node:not(.child) .book {
    margin-left: 6px;
  }

  .newtag {
    font-family: 'Liberation Sans', sans-serif;
    font-size: 9px;
    font-weight: 700;
    line-height: 8px;
    background: #ffe400;
    margin: -6px 0 0 1px;
    letter-spacing: 0.300px;
  }

  /* right side */
  .right {
    flex: 1;
    min-width: 0;
    margin-left: 4px;
    display: flex;
    flex-direction: column;
  }

  .canvas {
    height: 310px;
    flex: none;
    background: #000;
    overflow: hidden;
  }

  .canvas svg {
    display: block;
  }

  .b-label {
    fill: #e8e8e8;
    font: 700 12px 'Liberation Mono', monospace;
  }

  .ax {
    font: 12px 'Liberation Mono', monospace;
  }

  .snap {
    height: 28px;
    flex: none;
    display: flex;
    padding: 3px 0 2px 3px;
    box-sizing: border-box;
    gap: 1px;
  }

  .snap .block {
    padding-right: 0;
  }

  .panel {
    height: 203px;
    flex: none;
    display: flex;
  }

  .gutter {
    width: 13px;
    flex: none;
    display: flex;
    flex-direction: column;
    padding-top: 4px;
    box-sizing: border-box;
  }

  .dots-col {
    flex: 1;
    margin: 2px 1px 0 1px;
    background: radial-gradient(circle, #c2c2c2 1px, transparent 1.200px) 0 0 / 4.500px 4px;
  }

  .panel-body {
    flex: 1;
    min-width: 0;
    display: flex;
    flex-direction: column;
  }

  .panel-bar {
    height: 26px;
    margin-top: 3px;
    flex: none;
    box-sizing: border-box;
  }

  .total {
    margin-left: 4px;
  }

  .grid-wrap {
    margin-top: 1px;
    height: 172px;
    flex: none;
    box-sizing: border-box;
    border: 1px solid #b8b8b8;
    border-right-width: 2px;
    background: #fff;
    display: flex;
    flex-direction: column;
    overflow: hidden;
  }

  table {
    table-layout: fixed;
    width: 1195px;
    border-collapse: collapse;
    flex: none;
  }

  th,
  td {
    border-right: 1px solid #bfbfbf;
    border-bottom: 1px solid #bfbfbf;
    padding: 0;
    overflow: hidden;
    white-space: nowrap;
  }

  th {
    height: 19px;
    font-weight: 400;
    text-align: center;
    background: linear-gradient(#fff, #ececec);
  }

  th.hot {
    background: linear-gradient(#fbd79c, #f7c070);
    color: #6a0080;
  }

  td {
    padding-left: 2px;
  }

  .tall td {
    height: 60px;
    background: #ccffd6;
  }

  .mid-row td {
    height: 28px;
    background: #ccffd6;
  }

  .blank-row td {
    height: 18px;
    background: #fff;
  }

  td.rh,
  .mid-row td.rh,
  .blank-row td.rh {
    text-align: center;
    padding: 0;
    background: linear-gradient(#fff, #ededed);
  }

  .tall td.rh.cur {
    background: #fdd085;
    color: #6a0080;
  }

  .tall td.selected {
    background: #aae8d6;
  }

  .frozen {
    border-left: 1px solid #000;
  }

  .grade {
    text-align: center;
  }

  .grade svg {
    vertical-align: middle;
  }

  td.shape {
    padding: 0;
    text-align: center;
    position: relative;
  }

  .shape svg {
    display: block;
  }

  .dim8 text {
    font: 10px 'Liberation Mono', monospace;
    fill: #000;
  }

  .span-no {
    display: block;
    font: 10px/10px 'Liberation Mono', monospace;
    color: #f00;
    margin-top: 1px;
  }

  .span-bar {
    display: block;
    height: 2px;
    width: 150px;
    background: #000;
    margin: 1px 0 0 22px;
  }

  .scroll {
    margin-top: auto;
    margin-bottom: 1px;
    height: 15px;
    flex: none;
    display: flex;
    background: #f0f0f0;
  }

  .arrow {
    width: 17px;
    height: 15px;
    flex: none;
  }

  .arrow.end {
    margin-left: auto;
  }

  .thumb {
    width: 822px;
    background: #cdcdcd;
  }

  /* status and taskbar */
  .status {
    height: 20px;
    flex: none;
    display: flex;
    gap: 2px;
  }

  .cell {
    box-sizing: border-box;
    flex: none;
    border: 1px solid #dcdcdc;
    background: #f8f8f8;
    padding-left: 1px;
    white-space: nowrap;
    line-height: 18px;
  }

  .cell.grow {
    flex: 1;
  }

  .taskbar {
    height: 40px;
    flex: none;
    display: flex;
    align-items: stretch;
    background: #05161c;
    color: #fff;
  }

  .tk {
    flex: none;
    display: flex;
    align-items: center;
    justify-content: center;
    box-sizing: border-box;
  }

  .search {
    width: 150px;
    flex: none;
    margin: 5px 0;
    background: #3d3d3d;
    display: flex;
    align-items: center;
    padding-left: 3px;
    box-sizing: border-box;
  }

  .search-t {
    margin-left: 5px;
    color: #9a9a9a;
  }

  .lens {
    margin-left: auto;
    margin-right: 8px;
  }

  .tk.tkapp {
    width: 49px;
    border-bottom: 2px solid transparent;
  }

  .tk.first {
    margin-left: 3px;
  }

  .tk.run {
    border-bottom-color: #76b9ed;
  }

  .tk.active {
    background: #33454c;
  }

  .tray {
    margin-left: auto;
    display: flex;
    align-items: center;
    position: relative;
    width: 304px;
    flex: none;
    height: 40px;
  }

  .desk {
    margin-left: 2px;
    font-size: 12px;
    color: #ddd;
  }

  .tray-more {
    align-self: flex-start;
    margin: 1px 0 0 10px;
    font-weight: 700;
    line-height: 14px;
  }

  .t-up { margin-left: 9px; }
  .t-wifi { margin-left: 11px; }
  .t-vol { margin-left: 9px; }

  .ime {
    margin-left: 8px;
    font-size: 19px;
    line-height: 20px;
  }

  .t-s { margin-left: 15px; }

  .s-t {
    fill: #fff;
    font: 700 13px 'Liberation Sans', sans-serif;
  }

  .clock {
    width: 64px;
    margin-left: 14px;
    display: flex;
    flex-direction: column;
    align-items: center;
    gap: 3px;
    font-size: 12px;
    color: #e8e8e8;
  }

  .t-note {
    margin-left: 18px;
  }
</style>
